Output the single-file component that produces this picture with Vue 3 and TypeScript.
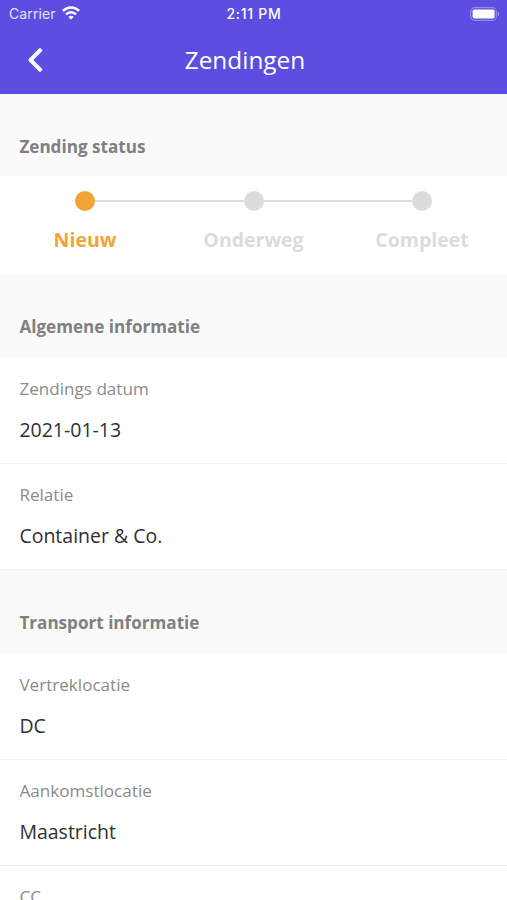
<script setup lang="ts">
interface Field {
  label: string
  value: string
}
interface Section {
  title: string
  fields: Field[]
}

const steps: { label: string; active: boolean }[] = [
  { label: 'Nieuw', active: true },
  { label: 'Onderweg', active: false },
  { label: 'Compleet', active: false },
]

const sections: Section[] = [
  {
    title: 'Algemene informatie',
    fields: [
      { label: 'Zendings datum', value: '2021-01-13' },
      { label: 'Relatie', value: 'Container & Co.' },
    ],
  },
  {
    title: 'Transport informatie',
    fields: [
      { label: 'Vertreklocatie', value: 'DC' },
      { label: 'Aankomstlocatie', value: 'Maastricht' },
      { label: 'CC', value: '' },
    ],
  },
]
</script>

<template>
  <div class="screen">
    <header class="header">
      <div class="status-bar">
        <div class="carrier">
          <span class="carrier-name">Carrier</span>
          <svg class="wifi" width="18" height="14" viewBox="0 0 18 14" fill="none" stroke="#fff" stroke-width="2.5">
            <path d="M.9 4.900C5.500.3 12.500.3 17.100 4.900" />
            <path d="M4 8.300C6.900 5.400 11.100 5.400 14 8.300" />
            <path d="M9 13.600L6.300 10.900C7.800 9.400 10.200 9.400 11.700 10.900Z" fill="#fff" stroke="none" />
          </svg>
        </div>
        <span class="clock">2:11 PM</span>
        <svg class="battery" width="30" height="14" viewBox="0 0 30 14">
          <rect x="0.700" y="0.700" width="25.600" height="12.600" rx="3.800" fill="none" stroke="#fff" stroke-opacity=".35" stroke-width="1.200" />
          <rect x="2.600" y="2.500" width="22" height="9" rx="1.800" fill="#fff" />
          <path d="M27.700 4.700C29.600 5.400 29.600 8.600 27.700 9.300Z" fill="#fff" fill-opacity=".4" />
        </svg>
      </div>
      <div class="nav-bar">
        <button class="back" aria-label="Terug">
          <svg width="16" height="26" viewBox="0 0 16 26" fill="none" stroke="#fff" stroke-width="3.900" stroke-linejoin="round">
            <path d="M14.300 2.200L3.500 13L14.300 23.800" />
          </svg>
        </button>
        <h1 class="title">Zendingen</h1>
      </div>
    </header>

    <h2 class="section-title first">Zending status</h2>
    <div class="steps">
      <div v-for="step in steps" :key="step.label" class="step" :class="{ active: step.active }">
        <span class="dot"></span>
        <span class="step-label">{{ step.label }}</span>
      </div>
    </div>

    <section v-for="section in sections" :key="section.title">
      <h2 class="section-title">{{ section.title }}</h2>
      <div v-for="field in section.fields" :key="field.label" class="field">
        <span class="field-label">{{ field.label }}</span>
        <span class="field-value">{{ field.value }}</span>
      </div>
    </section>
  </div>
</template>

<style>
body {
  margin: 0;
  overflow: hidden;
}
</style>

<style scoped>
.screen {
  height: 900px;
  overflow: hidden;
  background: #fff;
  font-family: 'Open Sans', sans-serif;
}
.header {
  height: 94px;
  background: #5b4ee0;
  color: #fff;
}
.status-bar {
  display: grid;
  grid-template-columns: 1fr auto 1fr;
  align-items: center;
  height: 27px;
  padding: 0 7px 0 9px;
  font: 14px/26px Inter, sans-serif;
}
.carrier {
  display: flex;
  align-items: center;
  gap: 6px;
  color: #e6e3fb;
}
.carrier-name {
  letter-spacing: 0.1px;
}
.wifi {
  margin-bottom: 1px;
}
.clock {
  margin-left: -1px;
  font-weight: 500;
  font-size: 14px;
  letter-spacing: 0.7px;
}
.battery {
  justify-self: end;
}
.nav-bar {
  display: grid;
  grid-template-columns: 70px 1fr 87px;
  align-items: center;
  height: 66px;
}
.back {
  display: flex;
  padding: 0 0 0 27px;
  border: 0;
  background: none;
}
.title {
  margin: 0;
  padding-bottom: 1px;
  font-size: 24.4px;
  font-weight: 400;
  line-height: 34px;
  text-align: center;
}
.section-title {
  box-sizing: border-box;
  height: 84px;
  margin: 0;
  padding: 41px 19.4px 0;
  background: #fafafa;
  color: #808080;
  font-size: 17.1px;
  font-weight: 700;
  line-height: 24px;
}
.section-title.first {
  height: 82px;
}
.steps {
  display: grid;
  grid-template-columns: repeat(3, 168.5px);
  justify-content: center;
  box-sizing: border-box;
  height: 98px;
  padding-top: 15px;
}
.step {
  display: grid;
  grid-template-columns: 1fr 20px 1fr;
  grid-template-rows: 20px 28px;
  row-gap: 15px;
  align-items: center;
  align-content: start;
  color: #dcdcdc;
}
.step::before,
.step::after {
  content: '';
  grid-row: 1;
  height: 2px;
  background: #dcdcdc;
}
.step::before {
  grid-column: 1;
}
.step::after {
  grid-column: 3;
}
.step:first-child::before,
.step:last-child::after {
  visibility: hidden;
}
.dot {
  grid-row: 1;
  grid-column: 2;
  height: 20px;
  border-radius: 50%;
  background: currentColor;
}
.step-label {
  grid-row: 2;
  grid-column: 1 / -1;
  text-align: center;
  font-size: 19.5px;
  font-weight: 700;
  line-height: 28px;
}
.active {
  color: #f2a536;
}
.field {
  display: flex;
  flex-direction: column;
  gap: 15px;
  box-sizing: border-box;
  height: 106px;
  padding: 19px 19.4px 0;
  border-bottom: 1px solid #f1f1f1;
}
.field-label {
  color: #8b8b8b;
  font-size: 17.1px;
  line-height: 24px;
}
.field-value {
  color: #303030;
  font-size: 19.5px;
  line-height: 28px;
}
</style>
